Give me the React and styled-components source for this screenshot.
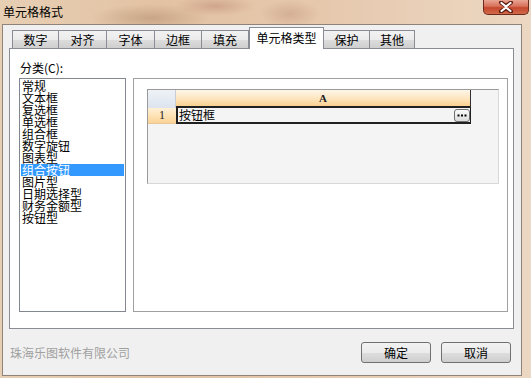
import React from "react";
import styled, { createGlobalStyle } from "styled-components";

const GlobalStyle = createGlobalStyle`
  html, body {
    margin: 0;
    padding: 0;
  }
  body {
    width: 531px;
    height: 378px;
    overflow: hidden;
    font-family: "Noto Sans CJK SC", "Liberation Sans", sans-serif;
    font-size: 12px;
    color: #000;
  }
`;

const tabs = [
  { label: "数字", width: 47 },
  { label: "对齐", width: 48 },
  { label: "字体", width: 48 },
  { label: "边框", width: 47 },
  { label: "填充", width: 47 },
  { label: "单元格类型", width: 75, active: true },
  { label: "保护", width: 46 },
  { label: "其他", width: 45 },
];

const categories = [
  "常规",
  "文本框",
  "复选框",
  "单选框",
  "组合框",
  "数字旋钮",
  "图表型",
  "组合按钮",
  "图片型",
  "日期选择型",
  "财务金额型",
  "按钮型",
];

export default function App() {
  return (
    <>
      <GlobalStyle />
      <Window>
        <TitleBar>
          <Title>单元格格式</Title>
          <CloseButton>
            <svg width="16" height="12" viewBox="0 0 16 12">
              <path
                d="M3 1.5 L8 5 L13 1.5 M3 10.5 L8 7 L13 10.5"
                stroke="#5a1a10"
                strokeWidth="4"
                fill="none"
                strokeLinecap="round"
              />
              <path
                d="M3.5 2 L8 5.5 L12.5 2 M3.5 10 L8 6.5 L12.5 10 M8 5.5 L8 6.5"
                stroke="#fff"
                strokeWidth="2.2"
                fill="none"
                strokeLinecap="round"
              />
            </svg>
          </CloseButton>
        </TitleBar>
        <Client>
          <TabRow>
            {tabs.map((t) => (
              <Tab key={t.label} $width={t.width} $active={t.active}>
                {t.label}
              </Tab>
            ))}
          </TabRow>
          <Panel>
            <Label>分类(C):</Label>
            <PanelBody>
              <ListBox>
                {categories.map((c) => (
                  <ListItem key={c} $selected={c === "组合按钮"}>
                    {c}
                  </ListItem>
                ))}
              </ListBox>
              <Preview>
                <Sheet>
                  <HeaderRow>
                    <Corner />
                    <ColHeader>A</ColHeader>
                  </HeaderRow>
                  <DataRow>
                    <RowHeader>1</RowHeader>
                    <Cell>
                      <CellText>按钮框</CellText>
                      <EllipsisButton>
                        <svg width="10" height="3" viewBox="0 0 10 3">
                          <rect x="0.5" y="0.5" width="2" height="2" fill="#000" />
                          <rect x="4" y="0.5" width="2" height="2" fill="#000" />
                          <rect x="7.5" y="0.5" width="2" height="2" fill="#000" />
                        </svg>
                      </EllipsisButton>
                    </Cell>
                  </DataRow>
                </Sheet>
              </Preview>
            </PanelBody>
          </Panel>
          <Footer>
            <Company>珠海乐图软件有限公司</Company>
            <Buttons>
              <Button>确定</Button>
              <Button>取消</Button>
            </Buttons>
          </Footer>
        </Client>
      </Window>
    </>
  );
}

const Window = styled.div`
  width: 531px;
  height: 378px;
  display: flex;
  flex-direction: column;
  box-sizing: border-box;
  background:
    radial-gradient(ellipse 60px 14px at 150px 18px, rgba(150, 110, 80, 0.35), transparent),
    radial-gradient(ellipse 40px 10px at 215px 6px, rgba(170, 110, 90, 0.35), transparent),
    radial-gradient(ellipse 30px 14px at 290px 14px, rgba(170, 120, 100, 0.3), transparent),
    linear-gradient(90deg, #e7cfb4 0%, #e3c2a3 30%, #e6c8ad 60%, #ecd7c2 100%);
`;

const TitleBar = styled.div`
  height: 24px;
  flex-shrink: 0;
  display: flex;
  justify-content: space-between;
  align-items: flex-start;
  padding: 0 2px 0 3px;
`;

const Title = styled.div`
  font-size: 12px;
  line-height: 12px;
  margin-top: 6px;
  color: #000;
`;

const CloseButton = styled.div`
  width: 46px;
  height: 15px;
  box-sizing: border-box;
  border: 1px solid #6b2a1e;
  border-top: none;
  border-radius: 0 0 5px 5px;
  background: linear-gradient(180deg, #e8a592 0%, #d7705a 45%, #c4472e 55%, #d36a4a 100%);
  display: flex;
  align-items: center;
  justify-content: center;
`;

const Client = styled.div`
  flex: 1;
  margin: 0 9px 2px 2px;
  background: #f0f0f0;
  border: 1px solid #8f8379;
  display: flex;
  flex-direction: column;
  padding: 2px 0 0 6px;
`;

const TabRow = styled.div`
  display: flex;
  align-items: flex-end;
  height: 22px;
  padding-left: 3px;
  margin-bottom: -1px;
  position: relative;
  z-index: 1;
`;

const Tab = styled.div`
  width: ${(p) => p.$width}px;
  height: ${(p) => (p.$active ? 22 : 19)}px;
  box-sizing: border-box;
  border: 1px solid #898c95;
  border-left-width: ${(p) => (p.$active ? 1 : 0)}px;
  border-bottom: ${(p) => (p.$active ? "none" : "1px solid #898c95")};
  background: ${(p) =>
    p.$active ? "#fff" : "linear-gradient(180deg, #f2f2f2 0%, #ebebeb 50%, #dddddd 51%, #cfcfcf 100%)"};
  display: flex;
  justify-content: center;
  align-items: ${(p) => (p.$active ? "flex-start" : "center")};
  padding-top: ${(p) => (p.$active ? 3 : 1)}px;
  font-size: 12px;
  line-height: 14px;
  &:first-child {
    border-left-width: 1px;
  }
`;

const Panel = styled.div`
  width: 505px;
  height: 281px;
  box-sizing: border-box;
  background: #fff;
  border: 1px solid #898c95;
  padding: 13px 5px 0 9px;
  display: flex;
  flex-direction: column;
`;

const Label = styled.div`
  font-size: 12px;
  line-height: 12px;
  margin-left: 1px;
  height: 12px;
  margin-bottom: 4px;
`;

const PanelBody = styled.div`
  display: grid;
  grid-template-columns: 107px 375px;
  column-gap: 7px;
  height: 234px;
`;

const ListBox = styled.div`
  border: 1px solid #828790;
  background: #fff;
  padding: 1px 1px 0 1px;
  display: flex;
  flex-direction: column;
`;

const ListItem = styled.div`
  height: 12px;
  line-height: 12px;
  font-size: 12px;
  padding-left: 1px;
  white-space: nowrap;
  background: ${(p) => (p.$selected ? "#3399ff" : "transparent")};
  color: ${(p) => (p.$selected ? "#fff" : "#000")};
`;

const Preview = styled.div`
  border: 1px solid #a0a0a0;
  background: #fff;
  padding: 10px 0 0 13px;
`;

const Sheet = styled.div`
  width: 352px;
  height: 95px;
  box-sizing: border-box;
  background: #f4f4f4;
  border: 1px solid #9a9a9a;
  border-right-color: #d8d8d8;
  border-bottom-color: #d8d8d8;
`;

const HeaderRow = styled.div`
  display: flex;
  height: 18px;
`;

const Corner = styled.div`
  width: 28px;
  background: linear-gradient(180deg, #eef2f7 0%, #dde4ee 100%);
  border-right: 1px solid #c7ced8;
  box-sizing: border-box;
`;

const ColHeader = styled.div`
  width: 295px;
  box-sizing: border-box;
  background: linear-gradient(180deg, #fef6e8 0%, #fde3b9 60%, #fbd18f 100%);
  border-right: 1px solid #303030;
  border-bottom: 2px solid #202020;
  display: flex;
  justify-content: center;
  align-items: center;
  font-family: "Liberation Serif", serif;
  font-weight: bold;
  font-size: 11px;
  color: #222;
`;

const DataRow = styled.div`
  display: flex;
  height: 16px;
`;

const RowHeader = styled.div`
  width: 28px;
  box-sizing: border-box;
  background: linear-gradient(180deg, #fff0d6 0%, #fde0b0 60%, #fbd395 100%);
  border-bottom: 1px solid #e8c79a;
  display: flex;
  justify-content: center;
  align-items: center;
  font-family: "Liberation Serif", serif;
  font-size: 12px;
  color: #222;
`;

const Cell = styled.div`
  width: 295px;
  box-sizing: border-box;
  border: 2px solid #202020;
  border-top: none;
  border-right-width: 1px;
  background: #f4f4f4;
  display: flex;
  align-items: center;
  justify-content: space-between;
  padding: 0 0 0 1px;
`;

const CellText = styled.span`
  font-size: 12px;
  line-height: 12px;
`;

const EllipsisButton = styled.div`
  width: 16px;
  height: 13px;
  box-sizing: border-box;
  margin-bottom: -1px;
  border: 1px solid #707070;
  border-radius: 3px;
  background: linear-gradient(180deg, #fafafa 0%, #dcdcdc 100%);
  display: flex;
  align-items: center;
  justify-content: center;
`;

const Footer = styled.div`
  flex: 1;
  display: flex;
  align-items: center;
  justify-content: space-between;
  padding: 0 10px 0 1px;
`;

const Company = styled.div`
  color: #a0a0a0;
  font-size: 12px;
`;

const Buttons = styled.div`
  display: flex;
  gap: 10px;
`;

const Button = styled.div`
  width: 70px;
  height: 21px;
  box-sizing: border-box;
  border: 1px solid #707070;
  border-radius: 3px;
  background: linear-gradient(180deg, #f2f2f2 0%, #ebebeb 50%, #dddddd 51%, #cfcfcf 100%);
  display: flex;
  align-items: center;
  justify-content: center;
  font-size: 12px;
`;
